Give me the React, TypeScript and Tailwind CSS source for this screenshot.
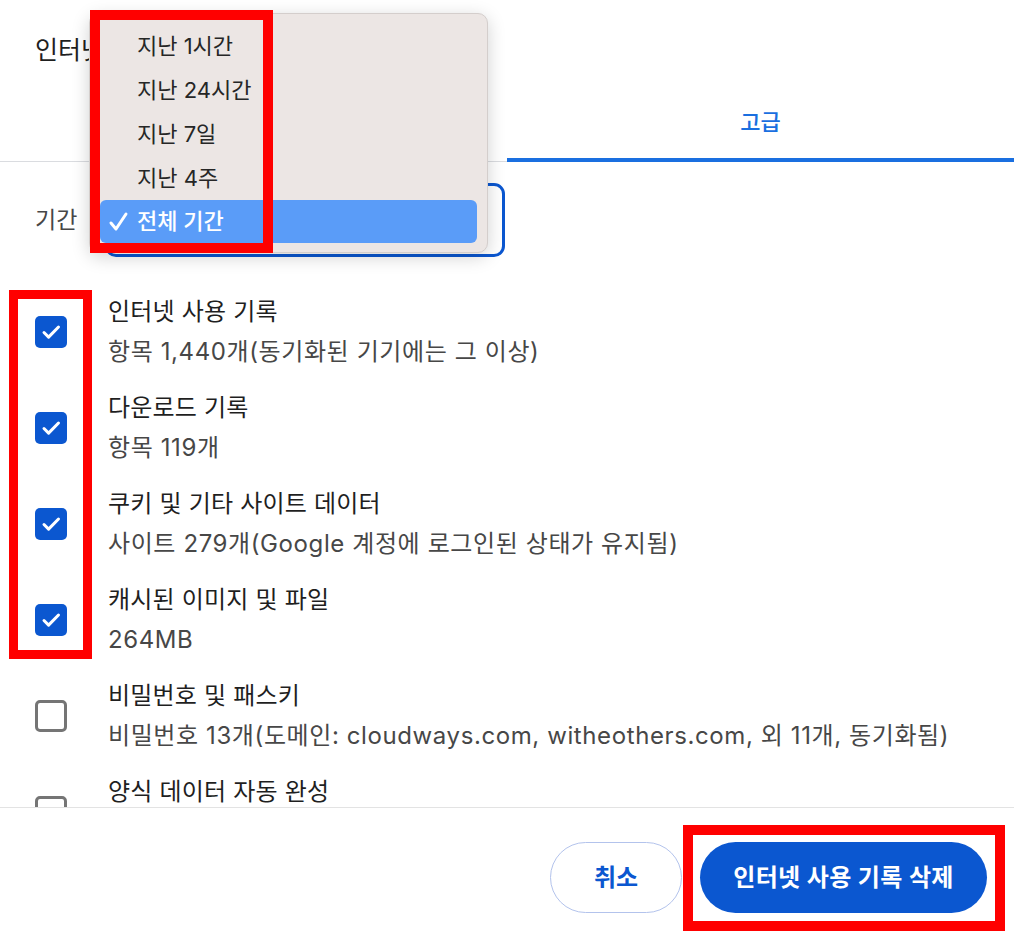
import React from "react";

type Item = {
	title: string;
	detail?: string;
	checked: boolean;
};

const items: Item[] = [
	{ title: "인터넷 사용 기록", detail: "항목 1,440개(동기화된 기기에는 그 이상)", checked: true },
	{ title: "다운로드 기록", detail: "항목 119개", checked: true },
	{ title: "쿠키 및 기타 사이트 데이터", detail: "사이트 279개(Google 계정에 로그인된 상태가 유지됨)", checked: true },
	{ title: "캐시된 이미지 및 파일", detail: "264MB", checked: true },
	{ title: "비밀번호 및 패스키", detail: "비밀번호 13개(도메인: cloudways.com, witheothers.com, 외 11개, 동기화됨)", checked: false },
	{ title: "양식 데이터 자동 완성", checked: false },
];

const ranges = ["지난 1시간", "지난 24시간", "지난 7일", "지난 4주"];

const Checkbox = ({ checked }: { checked: boolean }) => {
	if (!checked) {
		return <div className="w-[32px] h-[32px] shrink-0 mt-[24px] rounded-[5px] border-[3px] border-[#757575]" />;
	}
	return (
		<div className="w-[32px] h-[32px] shrink-0 mt-[24px] rounded-[5px] bg-[#0b57d0] flex items-center justify-center">
			<svg width="32" height="32" viewBox="0 0 32 32" fill="none">
				<path d="M9 16.5l4.6 4.6L23.5 11" stroke="white" strokeWidth="3" strokeLinecap="round" strokeLinejoin="round" />
			</svg>
		</div>
	);
};

export default function App() {
	return (
		<div
			className="relative w-[1014px] h-[940px] overflow-hidden bg-white text-[#1f1f1f]"
			style={{ fontFamily: 'Inter, "Noto Sans CJK KR", sans-serif' }}
		>
			{/* header */}
			<div className="h-[84px] pl-[35px] pt-[34px]">
				<div className="text-[25px] leading-[32px]">인터넷 사용 기록 삭제</div>
			</div>

			{/* tabs */}
			<div className="flex h-[78px] border-b border-[#dadce0]">
				<div className="flex-1" />
				<div className="relative flex-1 flex items-center justify-center text-[22px] font-medium text-[#1a6fe0]">
					고급
					<div className="absolute left-0 right-0 bottom-[-1px] h-[4px] bg-[#1a6fe0]" />
				</div>
			</div>

			{/* time range */}
			<div className="flex items-center pl-[35px] pt-[21px]">
				<div className="w-[70px] text-[23px] text-[#474747]">기간</div>
				<div className="w-[400px] h-[74px] rounded-[11px] border-[3px] border-[#0b57d0]" />
			</div>

			{/* items list */}
			<div className="h-[551px] overflow-hidden pt-[35px] border-b border-[#e3e3e3] flex flex-col gap-[16px]">
				{items.map((item) => (
					<div key={item.title} className="flex items-start h-[80px] shrink-0 pl-[35px] gap-[41px]">
						<Checkbox checked={item.checked} />
						<div className="flex flex-col text-[24px] leading-[40px] tracking-[0.2px]">
							<div className="text-[#1f1f1f]">{item.title}</div>
							{item.detail && <div className="text-[#474747] tracking-[0.6px]">{item.detail}</div>}
						</div>
					</div>
				))}
			</div>

			{/* footer */}
			<div className="flex justify-end gap-[18px] pt-[34px] pr-[27px]">
				<button className="w-[132px] h-[71px] rounded-full border border-[#b3c3ec] text-[24px] font-semibold text-[#0b57d0]">
					취소
				</button>
				<button className="w-[287px] h-[71px] rounded-full bg-[#0b57d0] text-[24px] font-semibold tracking-[0.3px] text-white">
					인터넷 사용 기록 삭제
				</button>
			</div>

			{/* open dropdown menu */}
			<div className="absolute left-[89px] top-[13px] w-[399px] h-[240px] rounded-[10px] bg-[#ece6e4] border border-[#d4cecc] shadow-[0_4px_18px_rgba(0,0,0,0.18)] pt-[10px] px-[10px]">
				{ranges.map((r) => (
					<div key={r} className="h-[44px] flex items-center pl-[37px] text-[22px] text-[#262626]">
						{r}
					</div>
				))}
				<div className="h-[43px] flex items-center rounded-[6px] bg-[#5a9cf8] text-white text-[22px] font-medium">
					<svg className="ml-[8px] mr-[7px]" width="22" height="22" viewBox="0 0 22 22" fill="none">
						<path d="M3 12l5 6L18 3" stroke="white" strokeWidth="3" strokeLinecap="round" strokeLinejoin="round" />
					</svg>
					전체 기간
				</div>
			</div>

			{/* annotation boxes */}
			<div className="absolute left-[90px] top-[10px] w-[183px] h-[243px] border-[10px] border-[#ff0000] pointer-events-none" />
			<div className="absolute left-[9px] top-[290px] w-[83px] h-[369px] border-[9px] border-[#ff0000] pointer-events-none" />
			<div className="absolute left-[683px] top-[825px] w-[322px] h-[106px] border-[10px] border-[#ff0000] pointer-events-none" />
		</div>
	);
}
